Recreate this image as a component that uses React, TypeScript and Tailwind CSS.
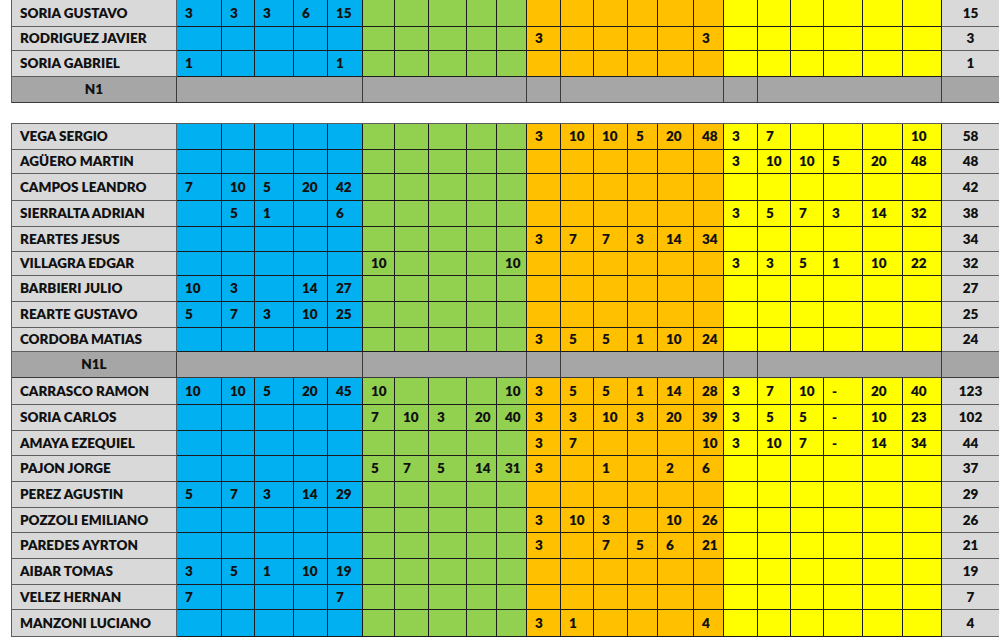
type Cell = string | number;

interface Row {
  name: string;
  blue?: Cell[];
  green?: Cell[];
  orange?: Cell[];
  yellow?: Cell[];
  total: Cell;
  h: string;
}

const topRows: Row[] = [
  { name: "SORIA GUSTAVO", blue: [3, 3, 3, 6, 15], total: 15, h: "h-[27px]" },
  { name: "RODRIGUEZ JAVIER", orange: [3, "", "", "", "", 3], total: 3, h: "h-[24px]" },
  { name: "SORIA GABRIEL", blue: [1, "", "", "", 1], total: 1, h: "h-[26px]" },
];

const groupA: Row[] = [
  { name: "VEGA SERGIO", orange: [3, 10, 10, 5, 20, 48], yellow: [3, 7, "", "", "", 10], total: 58, h: "h-[26px]" },
  { name: "AGÜERO MARTIN", yellow: [3, 10, 10, 5, 20, 48], total: 48, h: "h-[24px]" },
  { name: "CAMPOS LEANDRO", blue: [7, 10, 5, 20, 42], total: 42, h: "h-[27px]" },
  { name: "SIERRALTA ADRIAN", blue: ["", 5, 1, "", 6], yellow: [3, 5, 7, 3, 14, 32], total: 38, h: "h-[26px]" },
  { name: "REARTES JESUS", orange: [3, 7, 7, 3, 14, 34], total: 34, h: "h-[25px]" },
  { name: "VILLAGRA EDGAR", green: [10, "", "", "", 10], yellow: [3, 3, 5, 1, 10, 22], total: 32, h: "h-[24px]" },
  { name: "BARBIERI JULIO", blue: [10, 3, "", 14, 27], total: 27, h: "h-[26px]" },
  { name: "REARTE GUSTAVO", blue: [5, 7, 3, 10, 25], total: 25, h: "h-[26px]" },
  { name: "CORDOBA MATIAS", orange: [3, 5, 5, 1, 10, 24], total: 24, h: "h-[24px]" },
];

const groupB: Row[] = [
  { name: "CARRASCO RAMON", blue: [10, 10, 5, 20, 45], green: [10, "", "", "", 10], orange: [3, 5, 5, 1, 14, 28], yellow: [3, 7, 10, "-", 20, 40], total: 123, h: "h-[27px]" },
  { name: "SORIA CARLOS", green: [7, 10, 3, 20, 40], orange: [3, 3, 10, 3, 20, 39], yellow: [3, 5, 5, "-", 10, 23], total: 102, h: "h-[26px]" },
  { name: "AMAYA EZEQUIEL", orange: [3, 7, "", "", "", 10], yellow: [3, 10, 7, "-", 14, 34], total: 44, h: "h-[25px]" },
  { name: "PAJON JORGE", green: [5, 7, 5, 14, 31], orange: [3, "", 1, "", 2, 6], total: 37, h: "h-[26px]" },
  { name: "PEREZ AGUSTIN", blue: [5, 7, 3, 14, 29], total: 29, h: "h-[26px]" },
  { name: "POZZOLI EMILIANO", orange: [3, 10, 3, "", 10, 26], total: 26, h: "h-[25px]" },
  { name: "PAREDES AYRTON", orange: [3, "", 7, 5, 6, 21], total: 21, h: "h-[26px]" },
  { name: "AIBAR TOMAS", blue: [3, 5, 1, 10, 19], total: 19, h: "h-[26px]" },
  { name: "VELEZ HERNAN", blue: [7, "", "", "", 7], total: 7, h: "h-[25px]" },
  { name: "MANZONI LUCIANO", orange: [3, 1, "", "", "", 4], total: 4, h: "h-[27px]" },
];

// column widths measured off the sheet: name, 5 blue, 5 green, 6 orange, 6 yellow, total
const cols =
  "grid grid-cols-[165px_45px_33px_39px_34px_35px_32px_34px_38px_30px_30px_34px_33px_34px_30px_36px_30px_34px_33px_33px_39px_40px_39px_57px]";

const cellBase = "border-r border-b border-[#1b1b1b] pl-[8px] flex items-center";

function Band({ values, count, bg }: { values?: Cell[]; count: number; bg: string }) {
  const list = values ?? Array.from({ length: count }, () => "");
  return (
    <>
      {list.map((v, i) => (
        <div key={i} className={`${cellBase} ${bg}`}>
          {v}
        </div>
      ))}
    </>
  );
}

function PlayerRow({ row }: { row: Row }) {
  return (
    <div className={`${cols} ${row.h}`}>
      <div className="border-r border-b border-[#5e5e5e] bg-[#d9d9d9] pl-[8px] flex items-center">
        {row.name}
      </div>
      <Band values={row.blue} count={5} bg="bg-[#00b0f0]" />
      <Band values={row.green} count={5} bg="bg-[#92d050]" />
      <Band values={row.orange} count={6} bg="bg-[#ffc000]" />
      <Band values={row.yellow} count={6} bg="bg-[#ffff00]" />
      <div className="border-b border-[#5e5e5e] bg-[#d9d9d9] flex items-center justify-center">
        {row.total}
      </div>
    </div>
  );
}

function DivRow({ label }: { label: string }) {
  const g = "bg-[#a6a6a6] border-r border-b border-[#3a3a3a]";
  return (
    <div className={`${cols} h-[26px]`}>
      <div className={`${g} flex items-center justify-center`}>{label}</div>
      <div className={`${g} col-span-5`} />
      <div className={`${g} col-span-5`} />
      <div className={g} />
      <div className={`${g} col-span-5`} />
      <div className={g} />
      <div className={`${g} col-span-5`} />
      <div className="bg-[#a6a6a6] border-b border-[#3a3a3a]" />
    </div>
  );
}

export default function App() {
  return (
    <div className="w-[1000px] h-[637px] overflow-hidden bg-white pl-[11px] font-['Lato','Liberation_Sans',sans-serif] text-[13.5px] font-extrabold text-[#111]">
      <div className="w-[988px] border-l border-r border-[#5e5e5e]">
        {topRows.map((r) => (
          <PlayerRow key={r.name} row={r} />
        ))}
        <DivRow label="N1" />
      </div>
      <div className="h-[20px]" />
      <div className="w-[988px] border-l border-r border-t border-[#5e5e5e]">
        {groupA.map((r) => (
          <PlayerRow key={r.name} row={r} />
        ))}
        <DivRow label="N1L" />
        {groupB.map((r) => (
          <PlayerRow key={r.name} row={r} />
        ))}
      </div>
    </div>
  );
}
